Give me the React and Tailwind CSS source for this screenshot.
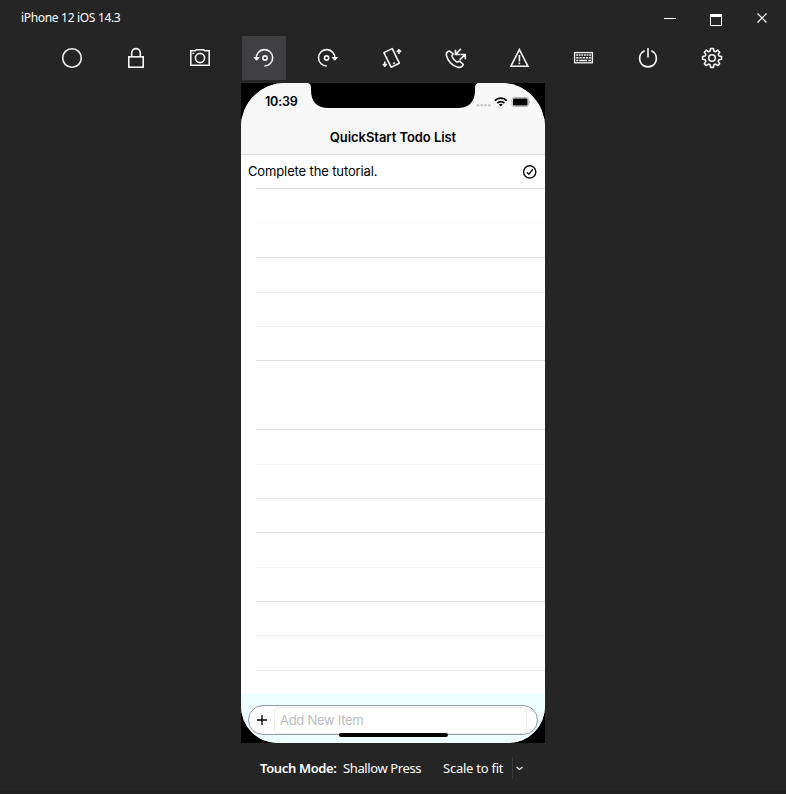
import React from 'react';

const ui = "font-['Noto_Sans','Open_Sans',sans-serif]";
const ios = "font-['Inter','Liberation_Sans',sans-serif]";

function Icon({ children }) {
  return (
    <svg width="24" height="24" viewBox="0 0 24 24" fill="none" stroke="#f4f4f4" strokeWidth="1.6">
      {children}
    </svg>
  );
}

const tools = [
  { name: 'Home', art: <circle cx="12" cy="12" r="9.3" /> },
  {
    name: 'Lock',
    art: (
      <>
        <rect x="4.8" y="10.8" width="14.4" height="10.4" />
        <path d="M7.7 11V6.9a4.3 4.3 0 0 1 8.6 0V11" />
      </>
    ),
  },
  {
    name: 'Screenshot',
    art: (
      <>
        <path d="M2.8 4.7h4.5l1-1h7.4l1 1h4.5v14.6H2.8z" />
        <circle cx="12" cy="12" r="4.6" />
        <path d="M4.3 7.4h2" strokeWidth="1.3" />
      </>
    ),
  },
  {
    name: 'Rotate Left',
    active: true,
    art: (
      <>
        <path d="M4.3 12.5a8.2 8.2 0 1 1 8.1 7.5" />
        <path d="M2 11.5h5.2l-2.6 2.8z" fill="#f4f4f4" strokeWidth="1" />
        <circle cx="13" cy="12" r="2.1" />
      </>
    ),
  },
  {
    name: 'Rotate Right',
    art: (
      <>
        <path d="M18.9 12.5a8.2 8.2 0 1 0 -8.1 7.5" />
        <path d="M21.4 11.5h-5.2l2.6 2.8z" fill="#f4f4f4" strokeWidth="1" />
        <circle cx="10.6" cy="12" r="2.1" />
      </>
    ),
  },
  {
    name: 'Shake',
    art: (
      <>
        <path d="M3.9 6.6l8.4-4 7 14.6-8.2 4z" strokeLinejoin="round" />
        <path d="M13.2 17.6l1.8-.9" />
        <path d="M18.9 7.9V4M16.9 5.8l2-1.9 2.2 1.9M4.8 15.6v4.2M2.8 18l2 2 2-2" />
      </>
    ),
  },
  {
    name: 'Toggle In-Call Status Bar',
    art: (
      <>
        <path
          strokeLinejoin="round"
          d="M5.3 5C3 5.7 1.9 7.3 2.5 9.8c1.4 5.6 6 10.2 11.2 11.4 2.6.6 4.7-.4 5.6-2.7l-3.6-3.4c-1.1.1-1.9 1.3-3.1.8-2.2-1.2-3.6-3.2-4.6-5.4-.4-1.2.8-1.7 1.1-2.8z"
        />
        <path d="M16.9 2.9l-5.2 5.2M11.4 3.8v4.7h4.7M15.7 13.9l5.2-5.2M16.6 8.5h4.7v4.7" />
      </>
    ),
  },
  {
    name: 'Simulate Memory Warning',
    art: (
      <>
        <path d="M11.4 3.6L19.9 20.2H2.9z" />
        <path d="M11.4 9v6.4M11.4 16.6v1.7" />
      </>
    ),
  },
  {
    name: 'Keyboard',
    art: (
      <>
        <rect x="2.6" y="6.6" width="17.8" height="10.2" strokeWidth="1.3" />
        <path d="M4.2 9.1h15" strokeDasharray="1.8 .8" strokeWidth="1.5" />
        <path d="M4.2 11.8h15" strokeDasharray="2.4 .8" strokeWidth="1.5" />
        <path d="M4.2 14.4h2.2M7.3 14.4h7.8M16.2 14.4h3" strokeWidth="1.5" />
      </>
    ),
  },
  {
    name: 'Power',
    art: (
      <>
        <path d="M8.6 4.8a8.4 8.4 0 1 0 6.8 0" />
        <path d="M12 2v9.5" />
      </>
    ),
  },
  {
    name: 'Settings',
    art: (
      <>
        <path
          strokeLinejoin="round"
          d="M10.6 2.5h2.8l.5 2.6 1.6.7 2.2-1.6 2 2-1.5 2.2.7 1.6 2.6.5v2.8l-2.6.5-.7 1.6 1.5 2.2-2 2-2.2-1.5-1.6.7-.5 2.6h-2.8l-.5-2.6-1.6-.7-2.2 1.5-2-2 1.6-2.2-.7-1.6-2.6-.5v-2.8l2.6-.5.7-1.6-1.6-2.2 2-2 2.2 1.6 1.6-.7z"
        />
        <circle cx="12" cy="12" r="3.3" />
      </>
    ),
  },
];

const separators = [
  'border-[#e0e0e0]', 'border-[#fcfcfc]', 'border-[#e2e2e2]', 'border-[#ededed]', 'border-[#f0f0f0]',
  'border-[#e0e0e0]', 'border-[#fdfdfd]', 'border-[#e2e2e2]', 'border-[#f2f2f2]', 'border-[#eaeaea]',
  'border-[#e2e2e2]', 'border-[#f7f7f7]', 'border-[#e0e0e0]', 'border-[#f2f2f2]', 'border-[#e8e8e8]',
];

function TitleBar() {
  return (
    <header className="flex h-9 items-center justify-between pl-[21px] pr-[18px] text-white">
      <span className={`${ui} text-[12px] leading-4 tracking-[-0.32px]`}>iPhone 12 iOS 14.3</span>
      <svg width="104" height="16" viewBox="0 0 104 16" fill="none" stroke="#fff">
        <path d="M0 8.5h12" />
        <path d="M46 5.5h12" strokeWidth="3" />
        <path d="M46.5 5v10.5h11V5" />
        <path d="M93.5 3.5l9 9M102.5 3.5l-9 9" strokeWidth="1.2" />
      </svg>
    </header>
  );
}

function StatusBar() {
  return (
    <div className="relative flex h-[36px] items-center justify-between pl-6 pr-[15px] pt-[2px]">
      <span className={`${ios} text-[12.5px] font-semibold leading-4 tracking-[-0.2px]`}>10:39</span>
      <svg className="absolute left-[66px] top-0" width="172" height="26" viewBox="0 0 172 26">
        <path d="M0 0Q4 0 4 5V7Q4 25 22 25H150Q168 25 168 7V5Q168 0 172 0z" fill="#000" />
      </svg>
      <svg width="54" height="12" viewBox="0 0 54 12">
        <g fill="#c8c8c8">
          <circle cx="2" cy="9.3" r="1.3" />
          <circle cx="5.8" cy="9.3" r="1.3" />
          <circle cx="9.6" cy="9.3" r="1.3" />
          <circle cx="13.2" cy="9.3" r="1.3" />
        </g>
        <g fill="none" stroke="#000" strokeWidth="1.8">
          <path d="M18.9 4.6a8.3 8.3 0 0 1 11.8 0" />
          <path d="M21.2 7.1a5.1 5.1 0 0 1 7.2 0" />
        </g>
        <path d="M22.9 8.5a2.9 2.9 0 0 1 3.8 0l-1.9 2z" />
        <rect x="36" y="1.5" width="16.5" height="9" rx="2.4" fill="none" stroke="#b4b4b4" />
        <rect x="37" y="2.5" width="14.5" height="7" rx="1.3" />
        <path d="M53.6 4.8v2.4" stroke="#999" strokeWidth=".8" />
      </svg>
    </div>
  );
}

function Phone() {
  return (
    <main className="relative h-[660px] w-[304px] bg-black">
      <div className="flex h-full flex-col overflow-hidden rounded-t-[44px] rounded-b-[37px] bg-white">
        <div className="h-[72px] shrink-0 border-b border-[#e2e2e2] bg-[#f7f7f7]">
          <StatusBar />
          <h1 className={`${ios} h-9 pt-2 text-center text-[13px] font-semibold leading-5 tracking-[-0.06px]`}>QuickStart Todo List</h1>
        </div>
        <div className="flex-1 overflow-hidden">
          {separators.map((tone, i) => (
            <div key={i} className="h-[34.4px] pl-[15px]">
              <div className={`h-full border-b ${tone}`}>
                {i === 0 && (
                  <div className="-ml-2 flex h-8 items-center justify-between pr-2">
                    <span className={`${ios} text-[13px] leading-5 tracking-[-0.13px]`}>Complete the tutorial.</span>
                    <svg width="15" height="15" viewBox="0 0 15 15" fill="none" stroke="#111" strokeWidth="1.4">
                      <circle cx="7.7" cy="7.9" r="6.1" />
                      <path d="M4.8 8.2l2.1 2.1 4-5" />
                    </svg>
                  </div>
                )}
              </div>
            </div>
          ))}
        </div>
        <footer className="h-[50px] shrink-0 bg-[#edffff] px-[7px] pt-[12px]">
          <div className="flex h-[30px] items-center rounded-full border border-[#929999] bg-white pl-2 pr-[10px]">
            <svg width="10" height="10" viewBox="0 0 10 10" stroke="#000" strokeWidth="1.3">
              <path d="M0 5h10M5 0v10" />
            </svg>
            <div className={`${ios} ml-[7px] h-[27px] flex-1 rounded border border-[#ececec] pl-[5px] text-[13px] leading-[25px] tracking-[-0.28px] text-[#bdbdbd]`}>
              Add New Item
            </div>
          </div>
        </footer>
      </div>
      <div className="absolute bottom-[6px] left-[98px] h-1 w-[109px] rounded-full bg-black" />
    </main>
  );
}

export default function App() {
  return (
    <div className="flex h-[794px] w-[786px] flex-col overflow-hidden border-b-4 border-[#202020] bg-[#252525]">
      <TitleBar />
      <nav className="flex h-[47px] gap-5 pl-[50px]">
        {tools.map((t) => (
          <button
            key={t.name}
            aria-label={t.name}
            className={`flex h-11 w-11 items-center justify-center ${t.active ? 'bg-[#404042]' : ''}`}
          >
            <Icon>{t.art}</Icon>
          </button>
        ))}
      </nav>
      <div className="flex justify-center">
        <Phone />
      </div>
      <div className={`${ui} flex flex-1 items-center pt-[3px] pl-[260px] text-[13px] leading-5 text-white`}>
        <span className="w-[83px] whitespace-nowrap font-semibold tracking-[-0.35px]">Touch Mode:</span>
        <span className="w-[100px] whitespace-nowrap tracking-[-0.38px]">Shallow Press</span>
        <span className="w-[69px] whitespace-nowrap tracking-[-0.25px]">Scale to fit</span>
        <span className="h-[22px] w-px bg-[#383838]" />
        <svg className="ml-[3px]" width="7" height="5" viewBox="0 0 7 5" fill="none" stroke="#eee" strokeWidth="1.2">
          <path d="M.5 1l3 2.5 3-2.5" />
        </svg>
      </div>
    </div>
  );
}
